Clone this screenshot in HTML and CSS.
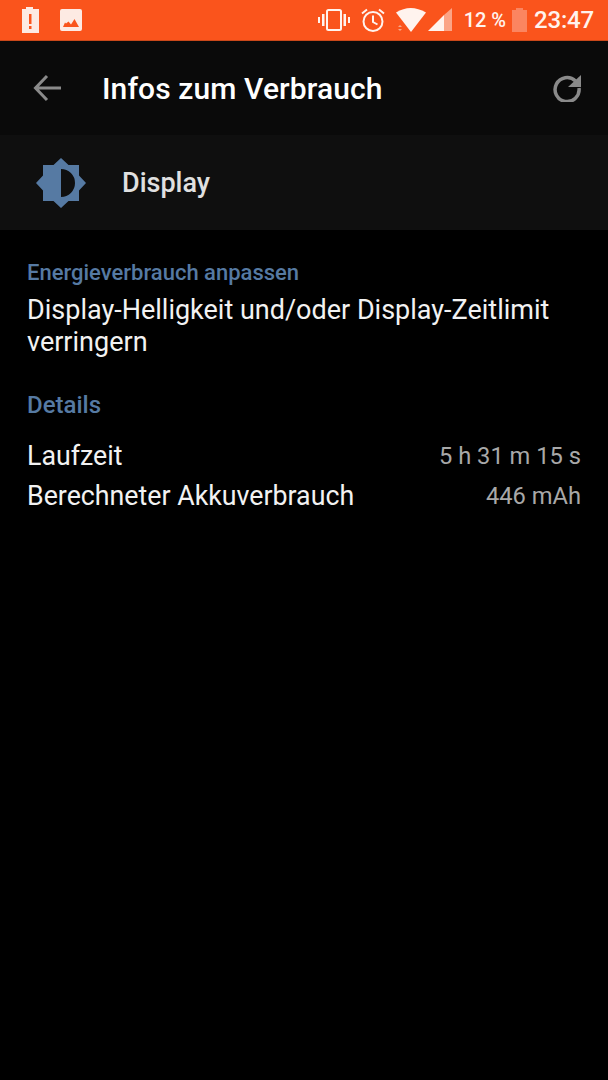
FILE: index.html
```html
<!DOCTYPE html>
<html>
<head>
<title>Infos zum Verbrauch</title>
<link rel="stylesheet" href="styles.css">
</head>
<body>

<!-- status bar -->
<div class="status">
	<svg class="ico ico_batt" viewBox="0 0 18 26"><path fill="#fdeae3" fill-rule="evenodd" d="M5 0h7v2h6v24H1V2h4zM8 7v10h2.500V7zM8 19v3h2.500v-3z"/></svg>
	<svg class="ico ico_pic" viewBox="0 0 22 22"><path fill="#fdeae3" fill-rule="evenodd" d="M2 0h18a2 2 0 0 1 2 2v18a2 2 0 0 1-2 2H2a2 2 0 0 1-2-2V2a2 2 0 0 1 2-2zM3 18h16l-4.500-8-3.500 5.500-2.500-3L6 14.500l-1-1z"/></svg>
	<div class="status_right">
		<svg class="ico ico_vib" viewBox="0 0 32 24"><g fill="none" stroke="#fff3ee" stroke-width="2"><rect x="9" y="2" width="14" height="20" rx="1.500"/></g><path fill="#fff3ee" d="M0 9h2v6H0zM4 6h2.500v12H4zM25.500 6H28v12h-2.500zM30 9h2v6h-2z"/></svg>
		<svg class="ico ico_alarm" viewBox="0 0 24 24"><g fill="none" stroke="#fff3ee" stroke-width="2"><circle cx="12" cy="13.500" r="9.500"/><path d="M12 7.500v6.500l4.500 2.500M1 5.500L6 1.500M23 5.500L18 1.500"/></g></svg>
		<svg class="ico ico_wifi" viewBox="0 0 30 26"><path fill="#fff3ee" d="M0 5.500Q14.500-3.500 30 5.500L15 25z"/><path fill="#f8a78a" d="M2 20l2-2 2 2zM2 22h4l-2 2z"/></svg>
		<svg class="ico ico_signal" viewBox="0 0 24 24"><path fill="#fff3ee" d="M0 23L16 7v16z"/><path fill="#fba486" d="M16 7l8-7v23h-8z"/></svg>
		<span class="pct">12 %</span>
		<svg class="ico ico_level" viewBox="0 0 15 24"><path fill="#fb8560" d="M4 0h7v2h4v22H0V2h4z"/></svg>
		<span class="time">23:47</span>
	</div>
</div>

<!-- action bar -->
<div class="bar">
	<svg class="ico ico_back" viewBox="0 0 28 28"><path fill="none" stroke="#8a8a8a" stroke-width="3" d="M28 14H3M14 2L2.500 14 14 26"/></svg>
	<h1>Infos zum Verbrauch</h1>
	<svg class="ico ico_refresh" viewBox="0 0 28 28"><path fill="none" stroke="#8a8a8a" stroke-width="3.500" d="M22.500 7A12 12 0 1 0 26 14"/><path fill="#8a8a8a" d="M28 1v12H15z"/></svg>
</div>

<!-- app row -->
<div class="head">
	<svg class="ico ico_display" viewBox="0 0 50 50"><path fill="#567aa3" fill-rule="evenodd" d="M25 0l7.500 7H43v10.500l7 7.500-7 7.500V43H32.500L25 50l-7.500-7H7V32.500L0 25l7-7.500V7h10.500zM25 11v28a14 14 0 0 0 0-28z"/></svg>
	<div class="head_title">Display</div>
</div>

<!-- content -->
<div class="content">
	<h2>Energieverbrauch anpassen</h2>
	<p class="tip">Display-Helligkeit und/oder Display-Zeitlimit verringern</p>
	<h2 class="details">Details</h2>
	<div class="row">
		<span>Laufzeit</span>
		<span class="val">5 h 31 m 15 s</span>
	</div>
	<div class="row">
		<span>Berechneter Akkuverbrauch</span>
		<span class="val">446 mAh</span>
	</div>
</div>

</body>
</html>
```

FILE: styles.css
```css
body,div,h1,h2,p {margin:0; padding:0;}
body {background: #000; width: 608px; height: 1080px; overflow: hidden; font-family: Roboto, "Liberation Sans", sans-serif; color: #fff;}
.ico {display: block; flex: none;}

/* status bar */
.status {background: #fa541c; height: 41px; display: flex; align-items: center; box-sizing: border-box; border-bottom: 1px solid #c9481a;}
.ico_batt {width: 18px; height: 26px; margin-left: 21px;}
.ico_pic {width: 22px; height: 22px; margin-left: 21px;}
.status_right {margin-left: auto; display: flex; align-items: center; padding-right: 14px; color: #fff3ee;}
.ico_vib {width: 32px; height: 24px;}
.ico_alarm {width: 24px; height: 24px; margin-left: 11px;}
.ico_wifi {width: 30px; height: 26px; margin-left: 11px;}
.ico_signal {width: 24px; height: 24px; margin-left: 2px;}
.pct {font-size: 20px; font-weight: 500; margin-left: 12px;}
.ico_level {width: 15px; height: 24px; margin-left: 6px;}
.time {font-size: 24px; font-weight: 500; margin-left: 7px; letter-spacing: -.2px;}

/* action bar */
.bar {background: #0a0a0a; height: 94px; display: flex; align-items: center; padding-right: 27px;}
.ico_back {width: 28px; height: 28px; margin-left: 33px;}
.bar h1 {font-size: 30px; font-weight: 500; margin-left: 41px; flex: 1; letter-spacing: .1px;}
.ico_refresh {width: 28px; height: 28px;}

/* app row */
.head {background: #0f0f0f; height: 95px; display: flex; align-items: center;}
.ico_display {width: 50px; height: 50px; margin-left: 36px;}
.head_title {font-size: 27px; font-weight: 500; color: #e0e0e0; margin-left: 36px; padding-top: 1px;}

/* content */
.content {padding: 29px 27px 0;}
h2 {font-size: 22px; font-weight: 500; color: #567aa3; line-height: 28px;}
.tip {font-size: 27px; line-height: 32px; color: #f2f2f2; margin-top: 7px;}
.details {margin-top: 31px; font-size: 24px; line-height: 32px;}
.row {display: flex; justify-content: space-between; align-items: center; font-size: 26.75px; line-height: 40px; color: #f2f2f2;}
.details + .row {margin-top: 15px;}
.val {font-size: 23.7px; color: #a8a8a8;}
```
